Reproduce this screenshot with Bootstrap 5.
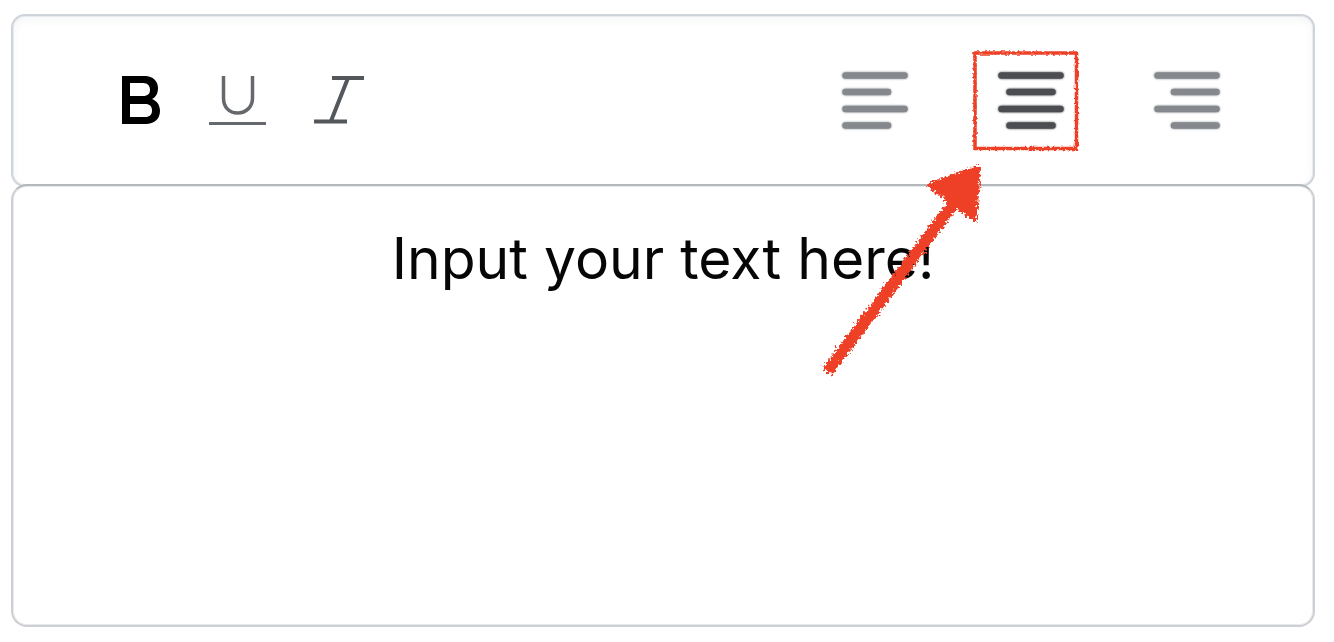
<!DOCTYPE html>
<html lang="en">
<head>
    <meta charset="UTF-8">
    <meta name="viewport" content="width=device-width, initial-scale=1">
    <title>Text Editor</title>
    <link rel="stylesheet" href="https://cdn.jsdelivr.net/npm/bootstrap@5.3.0/dist/css/bootstrap.min.css">
    <style>
        .editor { height: 642px; padding: 14px 19px 15px 11px; }
        .editor-bar {
            height: 173px;
            padding: 0 93px 0 109px;
            border: 2px solid #ced4da;
            border-radius: 14px;
            box-shadow: inset 0 0 0 1px #e9ecef, inset 0 4px 8px rgba(70, 80, 110, .06);
        }
        .editor-page {
            margin-top: -3px;
            padding-top: 31px;
            border: 2px solid #cccfd3;
            border-top-color: #b3b8bc;
            border-radius: 16px;
            box-shadow: inset 0 0 0 1px #e8eaec;
            color: #060606;
            font: 400 57px/84px Inter, "Liberation Sans", sans-serif;
        }
        .format-tools { gap: 48px; }
        .align-tools { gap: 90px; color: #85898e; }
        .align-tools .active { color: #4b4d50; }
        .align-tools path { stroke-width: 6.5px; }
        .align-tools svg { overflow: visible; filter: drop-shadow(0 0 .8px currentColor); }
        .editor svg { display: block; }
        .annotation { pointer-events: none; }
    </style>
</head>
<body class="bg-white overflow-hidden">
<div class="editor position-relative d-flex flex-column">
    <div class="editor-bar d-flex align-items-center justify-content-between" role="toolbar" aria-label="Formatting">
        <div class="format-tools d-flex">
            <button type="button" class="btn p-0 border-0" aria-label="Bold">
                <svg width="39" height="65" viewBox="0 0 39 65"><path fill="#000" fill-rule="evenodd" d="M0 8H23C31 8 36 13 36 20C36 25 34 29 30 31C35 33 38 37 38 43C38 51 32 56 24 56H0ZM8 15V28H21C26 28 28 25.500 28 22C28 18 26 15 21 15ZM8 36V49H23C28 49 30 46.500 30 42.500C30 38.500 28 36 23 36Z"/></svg>
            </button>
            <button type="button" class="btn p-0 border-0" aria-label="Underline">
                <svg width="57" height="65" viewBox="0 0 57 65" fill="none" stroke="#65686c"><path stroke-width="3.500" d="M14.500 8V30C14.500 39 20 45 28.500 45S43.500 39 43.500 30V8"/><path stroke-width="3" d="M0 55.500H57"/></svg>
            </button>
            <button type="button" class="btn p-0 border-0" aria-label="Italic">
                <svg width="50" height="65" viewBox="0 0 50 65" fill="none" stroke="#54575b" stroke-width="4"><path d="M18 10H50M0 53.500H33M34 10L17 53"/></svg>
            </button>
        </div>
        <div class="align-tools d-flex">
            <button type="button" class="btn p-0 border-0 text-reset" aria-label="Align left">
                <svg width="66" height="65" viewBox="0 0 66 65" fill="none" stroke="currentColor" stroke-linecap="round"><path d="M3.500 7.500H62.500M3.500 24H46M3.500 41H62.500M3.500 57.500H46"/></svg>
            </button>
            <button type="button" class="btn p-0 border-0 active" aria-label="Align center">
                <svg width="66" height="65" viewBox="0 0 66 65" fill="none" stroke="currentColor" stroke-linecap="round"><path d="M3.500 7.500H62.500M11.500 24H54.500M3.500 41H62.500M11.500 57.500H54.500"/></svg>
            </button>
            <button type="button" class="btn p-0 border-0 text-reset" aria-label="Align right">
                <svg width="66" height="65" viewBox="0 0 66 65" fill="none" stroke="currentColor" stroke-linecap="round"><path d="M3.500 7.500H62.500M20 24H62.500M3.500 41H62.500M20 57.500H62.500"/></svg>
            </button>
        </div>
    </div>
    <div class="editor-page flex-grow-1 text-center" contenteditable="true" spellcheck="false">Input your text here!</div>

    <!-- Crayon marks pointing at the center button -->
    <svg class="annotation position-absolute top-0 start-0" width="1334" height="642" viewBox="0 0 1334 642" fill="none" stroke="#ee4026">
        <defs>
            <filter id="crayon" filterUnits="userSpaceOnUse" x="800" y="30" width="300" height="370" color-interpolation-filters="sRGB">
                <feTurbulence type="fractalNoise" baseFrequency=".4" numOctaves="2" seed="4"/>
                <feDisplacementMap in="SourceGraphic" scale="9" xChannelSelector="R" yChannelSelector="G"/>
            </filter>
            <filter id="pencil" filterUnits="userSpaceOnUse" x="960" y="40" width="130" height="120" color-interpolation-filters="sRGB">
                <feTurbulence type="fractalNoise" baseFrequency=".4" numOctaves="1" seed="2"/>
                <feDisplacementMap in="SourceGraphic" scale="4" xChannelSelector="R" yChannelSelector="G"/>
            </filter>
        </defs>
        <path filter="url(#pencil)" stroke-width="3.500" d="M975 53H1076.500V148.500H975Z"/>
        <g filter="url(#crayon)">
            <path stroke-width="12" d="M827 372L957 199"/>
            <path fill="#ee4026" stroke-width="4" stroke-linejoin="round" d="M929 185L979 167L975 220Z"/>
        </g>
    </svg>
</div>

<script src="https://cdn.jsdelivr.net/npm/bootstrap@5.3.0/dist/js/bootstrap.bundle.min.js"></script>
</body>
</html>
